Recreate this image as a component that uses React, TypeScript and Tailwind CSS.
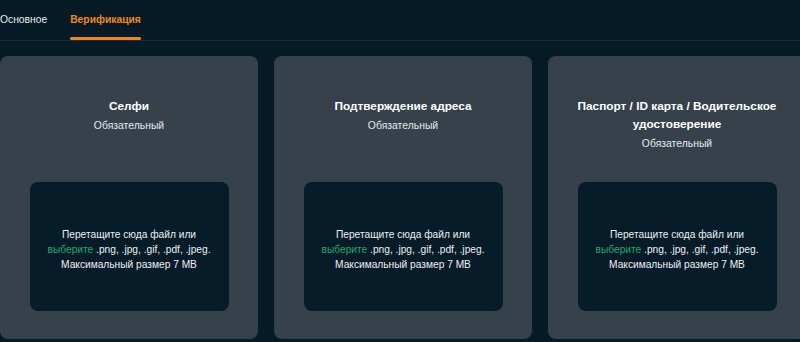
import React from 'react';

const DOCS = [
    { title: 'Селфи' },
    { title: 'Подтверждение адреса' },
    { title: 'Паспорт / ID карта / Водительское удостоверение' },
];

const UploadCard: React.FC<{ title: string }> = ({ title }) => {
    return (
        <div className="w-[258px] h-[283px] shrink-0 rounded-[8px] bg-[#37414c] px-[20px] pt-[41px] pb-[28px] flex flex-col items-center">
            <h3 className="text-[11.8px] leading-[18px] font-bold text-white text-center">{title}</h3>
            <p className="mt-[3px] text-[10.4px] leading-[16px] text-[#e6e8ea] text-center">Обязательный</p>
            <div className="mt-auto w-[199px] h-[129px] rounded-[8px] bg-[#061c28] flex items-center justify-center">
                <p className="pt-[5px] text-[10.2px] leading-[15px] text-[#eef0f2] text-center">
                    Перетащите сюда файл или
                    <br />
                    <span className="text-[#20a86a] cursor-pointer">выберите</span> .png, .jpg, .gif, .pdf, .jpeg.
                    <br />
                    Максимальный размер 7 MB
                </p>
            </div>
        </div>
    );
};

export default function App() {
    return (
        <div className="w-[800px] h-[342px] overflow-hidden bg-[#071b27] font-['Liberation_Sans']">
            <div className="flex gap-[23px] h-[41px] border-b border-[#1d2e3a]">
                <button className="h-full text-[10.3px] text-[#e8eaec] relative">Основное</button>
                <button className="h-full text-[10.3px] font-bold text-[#f4861f] relative">
                    Верификация
                    <span className="absolute left-0 right-0 bottom-0 h-[3px] rounded-full bg-[#f4861f]" />
                </button>
            </div>
            <div className="flex gap-[16px] pt-[15px]">
                {DOCS.map((d) => (
                    <UploadCard key={d.title} title={d.title} />
                ))}
            </div>
        </div>
    );
}
